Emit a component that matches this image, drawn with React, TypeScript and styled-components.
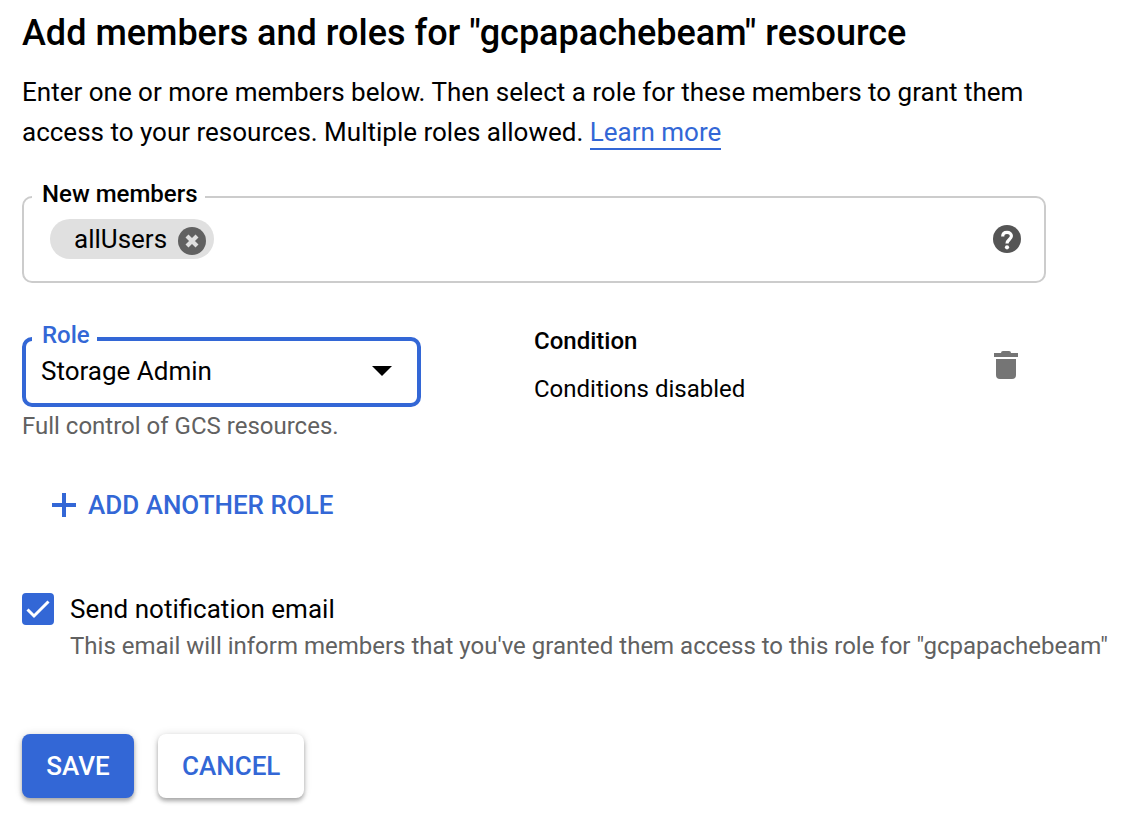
import React, { useState } from "react";
import styled, { createGlobalStyle, css } from "styled-components";

const blue = "#3367d6";

const GlobalStyle = createGlobalStyle`
  *, *::before, *::after { box-sizing: border-box; }
  body {
    margin: 0;
    background: #fff;
    color: #000;
    font-family: Roboto, "Liberation Sans", sans-serif;
    font-size: 26px;
    line-height: 32px;
  }
  button, input, select { font: inherit; color: inherit; }
`;

const Page = styled.main`
  padding: 13px 22px 32px;
`;

const Content = styled.div`
  margin-right: 72px;
`;

const Title = styled.h1`
  margin: 0 0 19px;
  font-size: 36px;
  font-weight: 500;
  line-height: 40px;
`;

const Intro = styled.p`
  margin: 0 0 30px;
  line-height: 40px;
`;

const TextLink = styled.a`
  padding-bottom: 1px;
  border-bottom: 2px solid ${blue};
  color: ${blue};
  text-decoration: none;
`;

const Outline = styled.fieldset<{ $active?: boolean }>`
  min-width: 0;
  margin: 0;
  border-style: solid;
  border-radius: 10px;
  ${({ $active }) =>
    $active
      ? css`
          border-width: 4px;
          border-color: ${blue};
          padding: 0 25px 16px 6px;
        `
      : css`
          border-width: 2px;
          border-color: #ccc;
          padding: 7px 23px 22px 8px;
        `}
`;

const OutlineLabel = styled.legend<{ $active?: boolean }>`
  padding: 0 7px ${({ $active }) => ($active ? 8 : 6)}px 10px;
  color: ${({ $active }) => ($active ? blue : "#000")};
  font-size: 24px;
  font-weight: 500;
  line-height: 24px;
`;

const ChipField = styled.div`
  display: flex;
  align-items: center;
  gap: 12px;
  padding-left: 18px;
`;

const Chip = styled.span`
  display: flex;
  align-items: flex-end;
  gap: 11px;
  padding: 4px 8px 4px 24px;
  border-radius: 20px;
  background: #e0e0e0;
`;

const ChipInput = styled.input`
  flex: 1;
  min-width: 0;
  padding: 0;
  border: 0;
  outline: 0;
  background: transparent;
`;

const IconButton = styled.button<{ $size: number }>`
  display: grid;
  place-items: center;
  flex: none;
  width: ${({ $size }) => $size}px;
  height: ${({ $size }) => $size}px;
  padding: 0;
  border: 0;
  background: none;
  cursor: pointer;
`;

const RoleRow = styled.section`
  display: grid;
  grid-template-columns: 1fr 1fr;
  margin: 40px 0 39px;
`;

const RoleCell = styled.div`
  padding-right: 113px;
`;

const ConditionCell = styled.div`
  display: flex;
  justify-content: space-between;
  padding: 6px 20px 0 0;
`;

const SelectWrap = styled.div`
  display: grid;
  align-items: center;
  padding-left: 9px;

  > * { grid-area: 1 / 1; }
  > svg { justify-self: end; pointer-events: none; }
`;

const Select = styled.select`
  width: 100%;
  height: 32px;
  padding: 0;
  border: 0;
  outline: 0;
  appearance: none;
  background: transparent;
`;

const Hint = styled.p`
  margin: 3px 0 0;
  color: #616161;
  font-size: 24px;
`;

const ConditionTitle = styled.h2`
  margin: 0 0 24px;
  font-size: 24px;
  font-weight: 500;
  line-height: 24px;
`;

const ConditionText = styled.p`
  margin: 0;
  font-size: 24px;
  line-height: 24px;
`;

const DeleteButton = styled(IconButton)`
  margin-top: 16px;
`;

const AddButton = styled.button`
  display: flex;
  align-items: center;
  gap: 12px;
  height: 48px;
  margin: 0 0 64px 22px;
  padding: 0 8px;
  border: 0;
  background: none;
  color: ${blue};
  font-weight: 500;
  cursor: pointer;
`;

const CheckRow = styled.div`
  display: grid;
  grid-template-columns: 32px 1fr;
  column-gap: 16px;
`;

const CheckWrap = styled.span`
  display: grid;
  place-items: center;

  > * { grid-area: 1 / 1; }
  > svg { visibility: hidden; pointer-events: none; }
  > input:checked + svg { visibility: visible; }
`;

const Checkbox = styled.input`
  width: 32px;
  height: 32px;
  margin: 0;
  border: 4px solid #757575;
  border-radius: 4px;
  appearance: none;

  &:checked {
    border-color: ${blue};
    background: ${blue};
  }
`;

const CheckHint = styled(Hint)`
  grid-column: 2;
  margin-top: 5px;
`;

const Actions = styled.div`
  display: flex;
  gap: 24px;
  margin-top: 72px;
`;

const ActionButton = styled.button<{ $primary?: boolean }>`
  min-width: 112px;
  height: 64px;
  padding: 0 24px;
  border: 0;
  border-radius: 8px;
  background: ${({ $primary }) => ($primary ? blue : "#fff")};
  color: ${({ $primary }) => ($primary ? "#fff" : blue)};
  font-weight: 500;
  box-shadow: 0 3px 4px rgba(0, 0, 0, 0.3), 0 0 8px rgba(0, 0, 0, 0.12);
  cursor: pointer;
`;

const CloseIcon = () => (
  <svg width="28" height="28" viewBox="0 0 28 28" aria-hidden="true">
    <circle cx="14" cy="14" r="14" fill="#616161" />
    <path d="M9 9l10 10M19 9L9 19" stroke="#e0e0e0" strokeWidth="4.2" />
  </svg>
);

const HelpIcon = () => (
  <svg width="28" height="28" viewBox="0 0 28 28" fill="none" aria-hidden="true">
    <circle cx="14" cy="14" r="14" fill="#555" />
    <path
      d="M9.7 11.4C9.7 8.9 11.4 7.4 14 7.4s4.4 1.5 4.4 3.7c0 3.2-4.4 3.7-4.4 7.4"
      stroke="#fff"
      strokeWidth="3.2"
    />
    <circle cx="14" cy="22.3" r="2.1" fill="#fff" />
  </svg>
);

const TrashIcon = () => (
  <svg width="24" height="28" viewBox="0 0 24 28" fill="#757575" aria-hidden="true">
    <path d="M0 2h7Q7 0 9 0h6q2 0 2 2h7v4H0zM2 8h20v16q0 4-4 4H6q-4 0-4-4z" />
  </svg>
);

export default function App() {
  const [members, setMembers] = useState(["allUsers"]);

  return (
    <Page>
      <GlobalStyle />
      <Content>
        <Title>Add members and roles for "gcpapachebeam" resource</Title>
        <Intro>
          Enter one or more members below. Then select a role for these members to grant them
          access to your resources. Multiple roles allowed. <TextLink href="#">Learn more</TextLink>
        </Intro>

        <Outline>
          <OutlineLabel>
            <label htmlFor="members">New members</label>
          </OutlineLabel>
          <ChipField>
            {members.map((name) => (
              <Chip key={name}>
                {name}
                <IconButton
                  type="button"
                  $size={28}
                  aria-label={`Remove ${name}`}
                  onClick={() => setMembers(members.filter((m) => m !== name))}
                >
                  <CloseIcon />
                </IconButton>
              </Chip>
            ))}
            <ChipInput id="members" type="text" />
            <IconButton type="button" $size={28} aria-label="Help">
              <HelpIcon />
            </IconButton>
          </ChipField>
        </Outline>

        <RoleRow>
          <RoleCell>
            <Outline $active>
              <OutlineLabel $active>
                <label htmlFor="role">Role</label>
              </OutlineLabel>
              <SelectWrap>
                <Select id="role" defaultValue="admin">
                  <option value="admin">Storage Admin</option>
                </Select>
                <svg width="20" height="10" viewBox="0 0 20 10" aria-hidden="true">
                  <path d="M0 0h20L10 10z" />
                </svg>
              </SelectWrap>
            </Outline>
            <Hint>Full control of GCS resources.</Hint>
          </RoleCell>
          <ConditionCell>
            <div>
              <ConditionTitle>Condition</ConditionTitle>
              <ConditionText>Conditions disabled</ConditionText>
            </div>
            <DeleteButton type="button" $size={40} aria-label="Delete role">
              <TrashIcon />
            </DeleteButton>
          </ConditionCell>
        </RoleRow>

        <AddButton type="button">
          <svg width="24" height="24" viewBox="0 0 24 24" aria-hidden="true">
            <path d="M12 0v24M0 12h24" stroke="currentColor" strokeWidth="4" />
          </svg>
          ADD ANOTHER ROLE
        </AddButton>
      </Content>

      <CheckRow>
        <CheckWrap>
          <Checkbox id="notify" type="checkbox" defaultChecked />
          <svg width="32" height="32" viewBox="0 0 32 32" fill="none" aria-hidden="true">
            <path d="M5.5 16.5L12 23 26.5 8.5" stroke="#fff" strokeWidth="3" />
          </svg>
        </CheckWrap>
        <label htmlFor="notify">Send notification email</label>
        <CheckHint>
          This email will inform members that you've granted them access to this role for
          "gcpapachebeam"
        </CheckHint>
      </CheckRow>

      <Actions>
        <ActionButton type="submit" $primary>
          SAVE
        </ActionButton>
        <ActionButton type="button">CANCEL</ActionButton>
      </Actions>
    </Page>
  );
}
